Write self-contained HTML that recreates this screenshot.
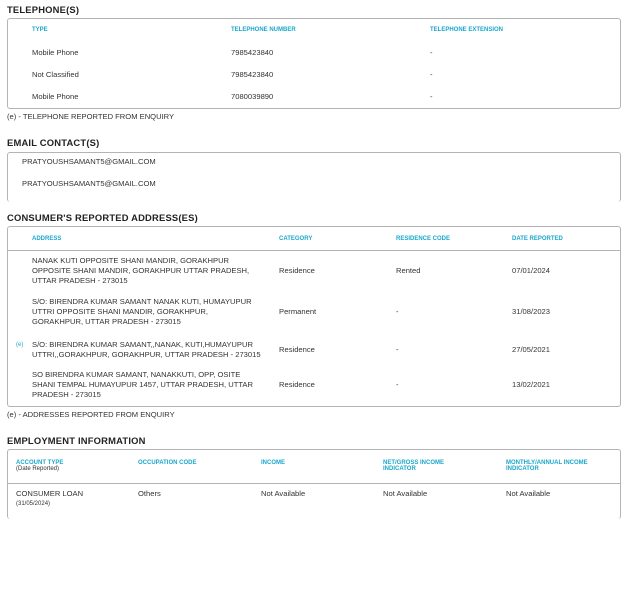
<!DOCTYPE html>
<html><head><meta charset="utf-8"><style>
*{margin:0;padding:0;box-sizing:border-box}
body{width:633px;height:597px;background:#fff;position:relative;font-family:"Liberation Sans",sans-serif;color:#333;font-size:7.6px;overflow:hidden}
.a{position:absolute;white-space:nowrap}
.h{font-weight:bold;font-size:9.4px;color:#222;letter-spacing:0.2px}
.c{color:#1ba7cc;font-weight:bold;font-size:6px}
.box{position:absolute;border:1px solid #b4b4b4;border-radius:3px}
.ln{line-height:10px}
.sep{position:absolute;height:1px;background:#b4b4b4}
</style></head><body>
<div class="a h" style="left:7px;top:4px">TELEPHONE(S)</div>
<div class="box" style="left:7px;top:18px;width:614px;height:91px"></div>
<div class="a c" style="left:32px;top:27px">TYPE</div>
<div class="a c" style="left:231px;top:27px">TELEPHONE NUMBER</div>
<div class="a c" style="left:430px;top:27px">TELEPHONE EXTENSION</div>
<div class="a" style="left:32px;top:48px">Mobile Phone</div><div class="a" style="left:231px;top:48px">7985423840</div><div class="a" style="left:430px;top:48px">-</div>
<div class="a" style="left:32px;top:70px">Not Classified</div><div class="a" style="left:231px;top:70px">7985423840</div><div class="a" style="left:430px;top:70px">-</div>
<div class="a" style="left:32px;top:92px">Mobile Phone</div><div class="a" style="left:231px;top:92px">7080039890</div><div class="a" style="left:430px;top:92px">-</div>
<div class="a" style="left:7px;top:112px">(e) - TELEPHONE REPORTED FROM ENQUIRY</div>

<div class="a h" style="left:7px;top:137px">EMAIL CONTACT(S)</div>
<div class="box" style="left:7px;top:152px;width:614px;height:50px;border-bottom:none"></div>
<div class="a" style="left:22px;top:157px">PRATYOUSHSAMANT5@GMAIL.COM</div>
<div class="a" style="left:22px;top:179px">PRATYOUSHSAMANT5@GMAIL.COM</div>

<div class="a h" style="left:7px;top:212px">CONSUMER'S REPORTED ADDRESS(ES)</div>
<div class="box" style="left:7px;top:226px;width:614px;height:181px"></div>
<div class="sep" style="left:8px;top:250px;width:612px"></div>
<div class="a c" style="left:32px;top:236px">ADDRESS</div>
<div class="a c" style="left:279px;top:236px">CATEGORY</div>
<div class="a c" style="left:396px;top:236px">RESIDENCE CODE</div>
<div class="a c" style="left:512px;top:236px">DATE REPORTED</div>
<div class="a ln" style="left:32px;top:256px">NANAK KUTI OPPOSITE SHANI MANDIR, GORAKHPUR<br>OPPOSITE SHANI MANDIR, GORAKHPUR UTTAR PRADESH,<br>UTTAR PRADESH - 273015</div>
<div class="a" style="left:279px;top:266px">Residence</div><div class="a" style="left:396px;top:266px">Rented</div><div class="a" style="left:512px;top:266px">07/01/2024</div>
<div class="a ln" style="left:32px;top:297px">S/O: BIRENDRA KUMAR SAMANT NANAK KUTI, HUMAYUPUR<br>UTTRI OPPOSITE SHANI MANDIR, GORAKHPUR,<br>GORAKHPUR, UTTAR PRADESH - 273015</div>
<div class="a" style="left:279px;top:307px">Permanent</div><div class="a" style="left:396px;top:307px">-</div><div class="a" style="left:512px;top:307px">31/08/2023</div>
<div class="a c" style="left:16px;top:342px;font-weight:normal">(e)</div>
<div class="a ln" style="left:32px;top:340px">S/O: BIRENDRA KUMAR SAMANT,,NANAK, KUTI,HUMAYUPUR<br>UTTRI,,GORAKHPUR, GORAKHPUR, UTTAR PRADESH - 273015</div>
<div class="a" style="left:279px;top:345px">Residence</div><div class="a" style="left:396px;top:345px">-</div><div class="a" style="left:512px;top:345px">27/05/2021</div>
<div class="a ln" style="left:32px;top:370px">SO BIRENDRA KUMAR SAMANT, NANAKKUTI, OPP, OSITE<br>SHANI TEMPAL HUMAYUPUR 1457, UTTAR PRADESH, UTTAR<br>PRADESH - 273015</div>
<div class="a" style="left:279px;top:380px">Residence</div><div class="a" style="left:396px;top:380px">-</div><div class="a" style="left:512px;top:380px">13/02/2021</div>
<div class="a" style="left:7px;top:410px">(e) - ADDRESSES REPORTED FROM ENQUIRY</div>

<div class="a h" style="left:7px;top:435px">EMPLOYMENT INFORMATION</div>
<div class="box" style="left:7px;top:449px;width:614px;height:70px;border-bottom:none"></div>
<div class="sep" style="left:8px;top:483px;width:612px"></div>
<div class="a c" style="left:16px;top:460px">ACCOUNT TYPE</div>
<div class="a" style="left:16px;top:466px;font-size:6px">(Date Reported)</div>
<div class="a c" style="left:138px;top:460px">OCCUPATION CODE</div>
<div class="a c" style="left:261px;top:460px">INCOME</div>
<div class="a c" style="left:383px;top:460px;line-height:6px">NET/GROSS INCOME<br>INDICATOR</div>
<div class="a c" style="left:506px;top:460px;line-height:6px">MONTHLY/ANNUAL INCOME<br>INDICATOR</div>
<div class="a" style="left:16px;top:489px">CONSUMER LOAN</div>
<div class="a" style="left:16px;top:501px;font-size:6px">(31/05/2024)</div>
<div class="a" style="left:138px;top:489px">Others</div>
<div class="a" style="left:261px;top:489px">Not Available</div>
<div class="a" style="left:383px;top:489px">Not Available</div>
<div class="a" style="left:506px;top:489px">Not Available</div>
</body></html>
